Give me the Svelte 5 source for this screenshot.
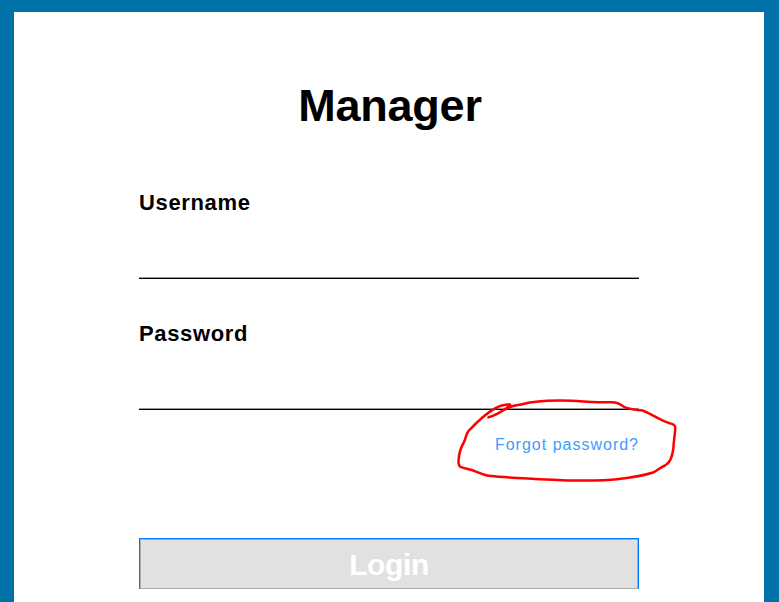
<script>
  const fields = [
    { id: 'username', label: 'Username', type: 'text' },
    { id: 'password', label: 'Password', type: 'password' }
  ];
</script>

<main class="page">
  <form class="panel">
    <h1>Manager</h1>
    {#each fields as field}
      <div class="field">
        <label for={field.id}>{field.label}</label>
        <input id={field.id} type={field.type} />
      </div>
    {/each}
    <a class="forgot" href="#forgot">Forgot password?</a>
    <button type="button"><span>Login</span></button>
    <svg class="scribble" width="230" height="100" viewBox="450 390 230 100" aria-hidden="true">
      <path d="M488.500 417.300C495 415.500 502 411.500 508 407C510 405.600 510.500 404.900 510 404.600C504 404.300 499 406.200 495 408.400C486 413.500 476 423 468.500 431C465.500 434.500 466 439 463.500 443C460 449 459 453 458.600 460C458.500 463 458 465.500 460.500 466.800C465 468.700 471 469.300 475.500 471.300C481 473.500 485 475.500 491 476.100C507 477.800 538 479 570 480.500C593 480.800 607 480.600 617 479.300C632 477.500 644 475.500 653 472.500C657 471 660 467.500 665 465.500C671 462.500 672.500 455 673.300 449C673.800 439 675.500 432 675.200 427C675 424.300 672.500 424 669 423C658 419.500 648 411.500 641 410.300C635 409.500 627 409 623.500 406.500C619 403.500 617 402.300 611 402.300C590 402.300 580 400.800 561 400.600C543 400.400 531 402 522 404.200C516 405.700 512 405.100 504 410" />
    </svg>
  </form>
</main>

<style>
  :global(body) {
    margin: 0;
    overflow: hidden;
  }
  .page {
    box-sizing: border-box;
    width: 779px;
    height: 602px;
    padding: 12px 15px 0 14px;
    background: #0072a8;
    font-family: 'Liberation Sans', Arial, sans-serif;
  }
  .panel {
    position: relative;
    box-sizing: border-box;
    display: flex;
    flex-direction: column;
    height: 590px;
    padding: 68px 125px 0;
    background: #fff;
  }
  h1 {
    margin: 0;
    padding-left: 2px;
    font-size: 45px;
    line-height: 52px;
    letter-spacing: -0.25px;
    text-align: center;
  }
  .field {
    display: flex;
    flex-direction: column;
    height: 131px;
  }
  h1 + .field {
    margin-top: 58px;
  }
  label {
    height: 26px;
    font-size: 22px;
    line-height: 26px;
    font-weight: bold;
    letter-spacing: 0.65px;
  }
  input {
    box-sizing: border-box;
    width: 500px;
    height: 63px;
    padding: 0 0 1px;
    border: 0;
    border-bottom: 1px solid #000;
    outline: 0;
    background: linear-gradient(#999, #999) bottom / 100% 1px no-repeat #fff;
    font: 18px 'Liberation Sans', Arial, sans-serif;
  }
  .forgot {
    align-self: flex-end;
    margin-top: -17px;
    color: #3f9bff;
    font-size: 16px;
    line-height: 20px;
    letter-spacing: 1px;
    text-decoration: none;
  }
  button {
    flex: none;
    width: 500px;
    height: 51px;
    margin-top: 83px;
    padding: 0;
    border: 1px solid #007bff;
    border-bottom: 0;
    background: #e1e1e1;
    color: #fff;
    font: bold 30px 'Liberation Sans', Arial, sans-serif;
    letter-spacing: -0.4px;
  }
  button span {
    box-sizing: border-box;
    display: block;
    height: 50px;
    border: 1px solid #adadad;
    line-height: 50px;
  }
  .scribble {
    position: absolute;
    left: 436px;
    top: 378px;
    pointer-events: none;
  }
  .scribble path {
    fill: none;
    stroke: #f00;
    stroke-width: 2.5;
    stroke-linecap: round;
    stroke-linejoin: round;
  }
</style>
